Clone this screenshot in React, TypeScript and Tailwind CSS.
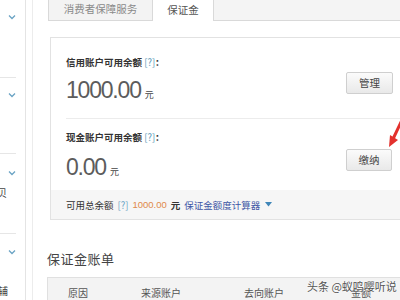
import React from "react";

const cjk = { fontFamily: '"Noto Sans CJK SC", "Liberation Sans", sans-serif' };
const num = { fontFamily: '"Liberation Sans", Arial, sans-serif' };

function Chevron() {
  return (
    <svg width="8" height="6" viewBox="0 0 8 6" className="block">
      <path d="M1 1.5 L4 4.5 L7 1.5" fill="none" stroke="#6aa3c4" strokeWidth="1.3" />
    </svg>
  );
}

function GrayButton({ label, w }: { label: string; w: string }) {
  return (
    <button
      className={`${w} h-[22px] border border-[#cfcfcf] rounded-[2px] bg-gradient-to-b from-[#fbfbfb] to-[#e9e9e9] text-[10.5px] text-[#444] leading-none flex items-center justify-center`}
    >
      {label}
    </button>
  );
}

export default function App() {
  return (
    <div className="w-[400px] h-[300px] overflow-hidden bg-white flex relative text-[#333]" style={cjk}>
      {/* ================= SIDEBAR ================= */}
      <aside className="w-[26px] shrink-0 border-r border-[#e4e4e4] flex flex-col overflow-hidden">
        <div className="h-[78px] mr-[9px] border-b border-[#e6e6e6] relative">
          <div className="absolute left-[8px] top-[14px]"><Chevron /></div>
        </div>
        <div className="h-[76px] mr-[9px] border-b border-[#e6e6e6] relative">
          <div className="absolute left-[8px] top-[14px]"><Chevron /></div>
        </div>
        <div className="h-[80px] mr-[9px] border-b border-[#e6e6e6] relative">
          <div className="absolute left-[8px] top-[16px]"><Chevron /></div>
          <div className="absolute left-[-13px] top-[33px] text-[10px] leading-[12px] text-[#444] whitespace-nowrap">宝贝</div>
        </div>
        <div className="flex-1 relative">
          <div className="absolute left-[8px] top-[15px]"><Chevron /></div>
          <div className="absolute left-[-2px] top-[51px] text-[10px] leading-[12px] text-[#444] whitespace-nowrap">辅</div>
        </div>
      </aside>
      <div className="w-[7px] shrink-0 border-r border-[#ececec]" />

      {/* ================= MAIN ================= */}
      <main className="flex-1 min-w-0 pl-[15px] flex flex-col">
        {/* TABS */}
        <div className="h-[21px] flex shrink-0">
          <div className="w-[105px] border-l border-r border-b border-[#d9d9d9] bg-[#f3f3f3] text-[10.5px] text-[#8a8a8a] flex items-center justify-center pb-[2px]">
            消费者保障服务
          </div>
          <div className="w-[60px] bg-white text-[10.5px] text-[#555] flex items-center justify-center pb-[2px]">
            保证金
          </div>
          <div className="flex-1 border-l border-b border-[#d9d9d9] bg-[#f4f4f4]" />
        </div>

        {/* CARD */}
        <section className="mt-[16px] ml-[2px] border border-r-0 border-[#e2e2e2] shrink-0">
          <div className="pl-[15px]">
            <div className="h-[81px] border-b border-[#ececec] flex justify-between items-start">
              <div className="pt-[17px]">
                <div className="text-[9.5px] leading-[14px] font-bold text-[#333]">
                  信用账户可用余额 <span className="font-normal text-[#5a9ab8]">[?]</span>：
                </div>
                <div className="mt-[9px] flex items-baseline">
                  <span className="text-[23px] leading-[24px] tracking-[-1.2px] text-[#5c5c5c]" style={num}>1000.00</span>
                  <span className="ml-[4px] text-[9px] text-[#444]">元</span>
                </div>
              </div>
              <div className="mt-[34px] mr-[7px]">
                <GrayButton label="管理" w="w-[47px]" />
              </div>
            </div>
            <div className="h-[71px] flex justify-between items-start">
              <div className="pt-[11px]">
                <div className="text-[9.5px] leading-[14px] font-bold text-[#333]">
                  现金账户可用余额 <span className="font-normal text-[#5a9ab8]">[?]</span>：
                </div>
                <div className="mt-[11px] flex items-baseline">
                  <span className="text-[23px] leading-[24px] tracking-[-1.2px] text-[#5c5c5c]" style={num}>0.00</span>
                  <span className="ml-[4px] text-[9px] text-[#444]">元</span>
                </div>
              </div>
              <div className="mt-[30px] mr-[8px]">
                <GrayButton label="缴纳" w="w-[46px]" />
              </div>
            </div>
          </div>
          <div className="h-[29px] bg-[#f6f6f6] pl-[15px] flex items-center text-[9.5px] leading-[12px] whitespace-nowrap">
            <span className="text-[#333]">可用总余额</span>
            <span className="ml-[4px] text-[#6aa3c4]">[?]</span>
            <span className="ml-[4px] text-[#e0894a]" style={num}>1000.00</span>
            <span className="ml-[4px] text-[#333] font-bold">元</span>
            <span className="ml-[4px] text-[#3d55a5]">保证金额度计算器</span>
            <svg width="7" height="5" viewBox="0 0 7 5" className="ml-[5px]">
              <path d="M0 0 H7 L3.5 4.5 Z" fill="#3f86b8" />
            </svg>
          </div>
        </section>

        {/* BILL */}
        <h2 className="mt-[31px] -ml-[1px] text-[13px] leading-[16px] text-[#444] font-normal tracking-[0.5px]">保证金账单</h2>
        <div className="mt-[10px] -ml-[1px] flex-1 border-t border-l border-[#e0e0e0] bg-[#f3f3f3] pt-[8px] pl-[20px] flex text-[10px] leading-[14px] text-[#555] whitespace-nowrap">
          <span className="w-[73px] shrink-0">原因</span>
          <span className="w-[103px] shrink-0">来源账户</span>
          <span className="w-[107px] shrink-0">去向账户</span>
          <span className="shrink-0">金额</span>
        </div>
      </main>

      {/* red arrow overlay */}
      <svg className="absolute left-[380px] top-[108px]" width="20" height="44" viewBox="0 0 20 44">
        <path d="M23 10 L13 31" stroke="#e3312d" strokeWidth="3" strokeLinecap="round" />
        <polygon points="9,39 10,27 18,32" fill="#e3312d" />
      </svg>

      {/* watermark */}
      <div
        className="absolute left-[307px] top-[279px] text-[11px] leading-[14px] text-[#555] whitespace-nowrap"
        style={{ textShadow: "0 0 2px #fff, 0 0 2px #fff" }}
      >
        头条 @蚁鸣嘤听说
      </div>
    </div>
  );
}
